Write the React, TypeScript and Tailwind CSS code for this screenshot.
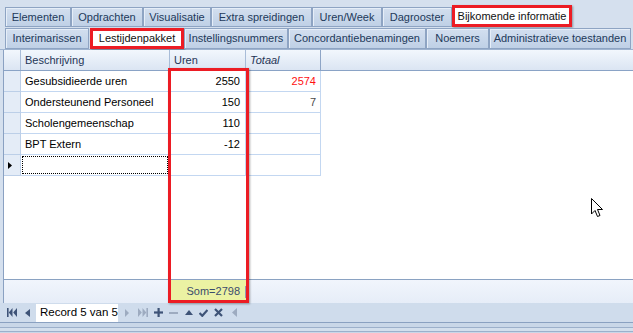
import React from "react";

const tabs1 = [
  { t: "Elementen", w: 66 },
  { t: "Opdrachten", w: 72 },
  { t: "Visualisatie", w: 68 },
  { t: "Extra spreidingen", w: 101 },
  { t: "Uren/Week", w: 70 },
  { t: "Dagrooster", w: 70 },
];

const tabs2a = [{ t: "Interimarissen", w: 84 }];
const tabs2b = [
  { t: "Instellingsnummers", w: 104 },
  { t: "Concordantiebenamingen", w: 138 },
  { t: "Noemers", w: 63 },
  { t: "Administratieve toestanden", w: 142 },
];

const rows = [
  { b: "Gesubsidieerde uren", u: "2550", t: "2574", red: true },
  { b: "Ondersteunend Personeel", u: "150", t: "7", red: false },
  { b: "Scholengemeenschap", u: "110", t: "", red: false },
  { b: "BPT Extern", u: "-12", t: "", red: false },
];

function Tab({ t, w, h }: { t: string; w: number; h: string }) {
  return (
    <div
      className={`${h} flex items-center justify-center border border-[#8ea4c3] bg-gradient-to-b from-[#d3dfef] to-[#bfd0e6] text-[#22395a] shadow-[inset_1px_1px_0_#e6eef8] whitespace-nowrap`}
      style={{ width: w }}
    >
      {t}
    </div>
  );
}

const dark = "#3e5377";
const gray = "#9dabc0";

export default function App() {
  return (
    <div className="relative w-[633px] h-[333px] overflow-hidden bg-[#d5e0ee] flex flex-col font-['Liberation_Sans',Arial,sans-serif] text-[11px] leading-none">
      {/* Tab row 1 */}
      <div className="mt-[5px] h-[22px] flex items-start pl-[5px]">
        {tabs1.map((x) => (
          <div key={x.t} className="mt-[2px]">
            <Tab t={x.t} w={x.w} h="h-[20px]" />
          </div>
        ))}
        <div className="w-[120px] h-[22px] flex items-center justify-center bg-white border-[3px] border-[#ec1c24] text-[#111] shadow-[1px_1px_2px_rgba(0,0,0,0.35)] whitespace-nowrap">
          Bijkomende informatie
        </div>
      </div>
      {/* Tab row 2 */}
      <div className="mt-[1px] h-[22px] flex items-start pl-[5px] border-b border-[#9fb4d0]">
        {tabs2a.map((x) => (
          <Tab key={x.t} t={x.t} w={x.w} h="h-[21px]" />
        ))}
        <div className="ml-[1px] w-[94px] h-[21px] flex items-center justify-center bg-white border-[3px] border-[#ec1c24] text-[#111] shadow-[1px_1px_2px_rgba(0,0,0,0.35)] whitespace-nowrap">
          Lestijdenpakket
        </div>
        {tabs2b.map((x) => (
          <Tab key={x.t} t={x.t} w={x.w} h="h-[21px]" />
        ))}
      </div>

      {/* Grid */}
      <div className="ml-[3px] flex-1 flex flex-col border-l border-[#8aa1c2] bg-white">
        {/* header */}
        <div className="h-[21px] flex border-b border-[#8aa3c6] bg-gradient-to-b from-[#f2f7fd] to-[#dbe5f3] text-[#1f3556]">
          <div className="w-[17px] border-r border-[#a8bcd8]" />
          <div className="w-[149px] border-r border-[#a8bcd8] flex items-center pl-[4px]">Beschrijving</div>
          <div className="w-[76px] border-r border-[#a8bcd8] flex items-center pl-[4px]">Uren</div>
          <div className="w-[75px] border-r border-[#8ea5c6] flex items-center pl-[4px] italic">Totaal</div>
          <div className="flex-1" />
        </div>
        {rows.map((r) => (
          <div key={r.b} className="h-[21px] flex">
            <div className="w-[17px] border-r border-b border-[#bccfe8] bg-[#e4ecf7]" />
            <div className="w-[149px] border-r border-b border-[#c3d7f1] flex items-center pl-[4px] text-black">{r.b}</div>
            <div className="w-[76px] border-r border-b border-[#c3d7f1] flex items-center justify-end pr-[5px] text-black">{r.u}</div>
            <div className={`w-[75px] border-r border-b border-[#c3d7f1] flex items-center justify-end pr-[4px] ${r.red ? "text-[#ff1010]" : "text-[#4a4a4a]"}`}>{r.t}</div>
          </div>
        ))}
        {/* new row */}
        <div className="h-[21px] flex">
          <div className="w-[17px] border-r border-b border-[#bccfe8] bg-[#e4ecf7] flex items-center pl-[4px]">
            <svg width="4" height="7" viewBox="0 0 4 7">
              <path d="M0 0 L4 3.5 L0 7 Z" fill="#000" />
            </svg>
          </div>
          <div className="w-[149px] border-r border-b border-[#c3d7f1] p-[1px]">
            <div className="w-full h-full border border-dotted border-black" />
          </div>
          <div className="w-[76px] border-r border-b border-[#c3d7f1]" />
          <div className="w-[75px] border-r border-b border-[#c3d7f1]" />
        </div>
        <div className="flex-1" />
        {/* footer */}
        <div className="h-[24px] flex border-t border-[#8aa2c2] bg-gradient-to-b from-[#f1f5fc] to-[#e6edf8]">
          <div className="w-[167px]" />
          <div className="w-[77px] bg-[#ebf2a3] flex items-center justify-end pr-[2px] text-[#3a4c6c]">
            <span>Som=2798</span>
            <span className="ml-[5px] w-[1px] h-[12px] bg-[#8d9db6]" />
          </div>
        </div>
      </div>

      {/* Navigator */}
      <div className="h-[19px] flex items-center bg-[#cfdcec]">
        <svg className="ml-[7px]" width="10" height="9" viewBox="0 0 10 9">
          <rect x="0" y="0" width="1.6" height="9" fill={dark} />
          <path d="M5.5 0 L1.8 4.5 L5.5 9 Z" fill={dark} />
          <path d="M10 0 L6.2 4.5 L10 9 Z" fill={dark} />
        </svg>
        <svg className="ml-[8px]" width="5" height="8" viewBox="0 0 5 8">
          <path d="M5 0 L0 4 L5 8 Z" fill={dark} />
        </svg>
        <div className="ml-[6px] w-[82px] h-[18px] bg-white flex items-center pl-[4px] text-[11.5px] text-black whitespace-nowrap">
          Record 5 van 5
        </div>
        <svg className="ml-[7px]" width="4" height="8" viewBox="0 0 4 8">
          <path d="M0 0 L4 4 L0 8 Z" fill={gray} />
        </svg>
        <svg className="ml-[9px]" width="10" height="9" viewBox="0 0 10 9">
          <path d="M0 0 L3.8 4.5 L0 9 Z" fill={gray} />
          <path d="M4.5 0 L8.3 4.5 L4.5 9 Z" fill={gray} />
          <rect x="8.4" y="0" width="1.6" height="9" fill={gray} />
        </svg>
        <svg className="ml-[6px]" width="9" height="9" viewBox="0 0 9 9">
          <rect x="3.5" y="0" width="2.2" height="9" fill={dark} />
          <rect x="0" y="3.4" width="9" height="2.2" fill={dark} />
        </svg>
        <svg className="ml-[6px]" width="9" height="8" viewBox="0 0 9 8">
          <rect x="0" y="3" width="9" height="2" fill={gray} />
        </svg>
        <svg className="ml-[7px]" width="8" height="5" viewBox="0 0 8 5">
          <path d="M0 5 L4 0 L8 5 Z" fill={dark} />
        </svg>
        <svg className="ml-[6px]" width="9" height="8" viewBox="0 0 9 8">
          <path d="M0.5 4 L3.3 6.8 L8.5 1" stroke={dark} strokeWidth="2.2" fill="none" />
        </svg>
        <svg className="ml-[6px]" width="9" height="9" viewBox="0 0 9 9">
          <path d="M1 1 L8 8 M8 1 L1 8" stroke={dark} strokeWidth="2.2" fill="none" />
        </svg>
        <svg className="ml-[9px]" width="5" height="9" viewBox="0 0 5 9">
          <path d="M5 0 L0 4.5 L5 9 Z" fill={gray} />
        </svg>
      </div>
      {/* bottom stripes */}
      <div className="h-[11px] flex flex-col">
        <div className="h-[1px] bg-[#8aa1c1]" />
        <div className="h-[4px] bg-[#c9d7e8]" />
        <div className="h-[1px] bg-[#9cb0cb]" />
        <div className="h-[3px] bg-[#d3dfed]" />
        <div className="h-[1px] bg-[#9cb0cb]" />
        <div className="h-[1px] bg-[#c9d7e8]" />
      </div>

      {/* red annotation box around Uren column */}
      <div className="absolute left-[168px] top-[68px] w-[81px] h-[235px] border-[3px] border-[#ec1c24] shadow-[1px_1px_2px_rgba(0,0,0,0.35)] pointer-events-none" />

      {/* mouse cursor */}
      <svg className="absolute left-[591px] top-[198px]" width="13" height="20" viewBox="0 0 13 20">
        <path
          d="M0.5 0.5 L0.5 16 L4 12.5 L6.5 18.5 L9 17.5 L6.5 11.5 L11.5 11.5 Z"
          fill="#fff"
          stroke="#000"
          strokeWidth="1"
          strokeLinejoin="miter"
        />
      </svg>
    </div>
  );
}
